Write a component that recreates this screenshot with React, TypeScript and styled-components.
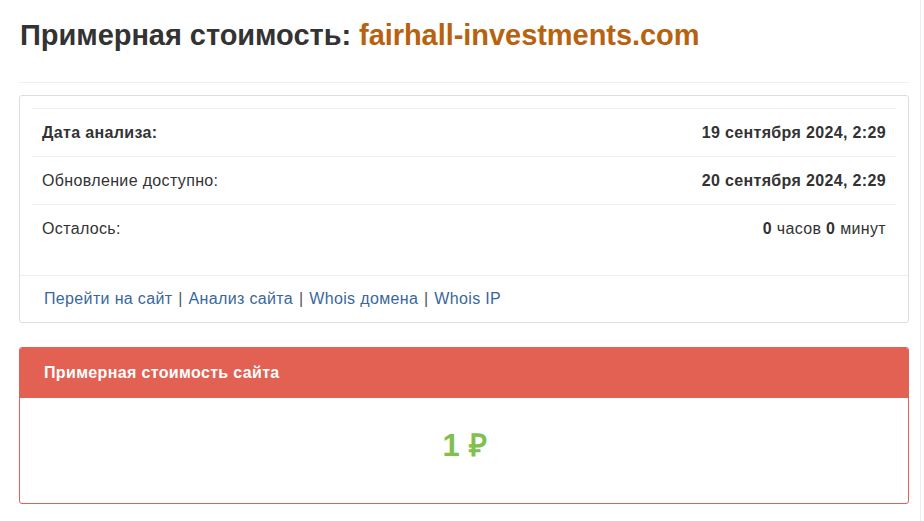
import React from 'react'
import styled, { createGlobalStyle } from 'styled-components'

const GlobalStyle = createGlobalStyle`
  html, body {
    margin: 0;
    padding: 0;
    background: #fff;
  }
  body {
    font-family: "Liberation Sans", Arial, sans-serif;
    font-size: 16px;
    letter-spacing: 0.35px;
    color: #333;
  }
`

const Page = styled.div`
  width: 921px;
  min-height: 521px;
  border-right: 1px solid #ececec;
  box-sizing: border-box;
  padding: 0 11px 0 19px;
`

const Title = styled.h1`
  margin: 0;
  padding: 18px 0 0 1px;
  font-size: 29px;
  line-height: 34px;
  font-weight: 700;
  letter-spacing: -0.05px;
  color: #333;
`

const Domain = styled.span`
  color: #b8620f;
`

const Rule = styled.hr`
  margin: 30px 0 12px;
  border: 0;
  border-top: 1px solid #eee;
`

const Panel = styled.div<{ $accent?: string }>`
  border: 1px solid ${p => p.$accent || '#ddd'};
  border-radius: 3px;
  background: #fff;
  margin-bottom: 24px;
  overflow: hidden;
`

const PanelBody = styled.div`
  padding: 12px 12px 23px;
`

const InfoTable = styled.div`
  border-top: 1px solid #eee;
`

const Row = styled.div<{ $last?: boolean }>`
  display: flex;
  justify-content: space-between;
  align-items: center;
  height: 47px;
  padding: 0 10px;
  border-bottom: ${p => (p.$last ? 'none' : '1px solid #eee')};
`

const Label = styled.span<{ $bold?: boolean }>`
  font-weight: ${p => (p.$bold ? 700 : 400)};
`

const Value = styled.span`
  font-weight: 700;
`

const Plain = styled.span`
  font-weight: 400;
`

const PanelFooter = styled.div`
  border-top: 1px solid #eee;
  padding: 12px 24px 13px;
  line-height: 21px;
  color: #555;
  white-space: pre;
`

const Link = styled.a`
  color: #3a679b;
  text-decoration: none;
`

const Sep = styled.span`
  color: #555;
  margin: 0 1px;
`

const Heading = styled.div`
  background: #e36152;
  color: #fff;
  font-weight: 700;
  font-size: 16px;
  height: 50px;
  display: flex;
  align-items: center;
  padding: 0 24px;
`

const PriceBody = styled.div`
  height: 105px;
  box-sizing: border-box;
  padding-bottom: 14px;
  display: flex;
  align-items: center;
  justify-content: center;
`

const Price = styled.span`
  color: #7fc050;
  font-size: 31px;
  font-weight: 700;
  padding-left: 2px;
`

const links = ['Перейти на сайт', 'Анализ сайта', 'Whois домена', 'Whois IP']

export default function App() {
  return (
    <>
      <GlobalStyle />
      <Page>
        <Title>
          Примерная стоимость: <Domain>fairhall-investments.com</Domain>
        </Title>
        <Rule />
        <Panel>
          <PanelBody>
            <InfoTable>
              <Row>
                <Label $bold>Дата анализа:</Label>
                <Value>19 сентября 2024, 2:29</Value>
              </Row>
              <Row>
                <Label>Обновление доступно:</Label>
                <Value>20 сентября 2024, 2:29</Value>
              </Row>
              <Row $last>
                <Label>Осталось:</Label>
                <Value>
                  0 <Plain>часов</Plain> 0 <Plain>минут</Plain>
                </Value>
              </Row>
            </InfoTable>
          </PanelBody>
          <PanelFooter>
            {links.map((l, i) => (
              <React.Fragment key={l}>
                {i > 0 && <Sep>{' | '}</Sep>}
                <Link href="#">{l}</Link>
              </React.Fragment>
            ))}
          </PanelFooter>
        </Panel>
        <Panel $accent="#e36152">
          <Heading>Примерная стоимость сайта</Heading>
          <PriceBody>
            <Price>1 ₽</Price>
          </PriceBody>
        </Panel>
      </Page>
    </>
  )
}
